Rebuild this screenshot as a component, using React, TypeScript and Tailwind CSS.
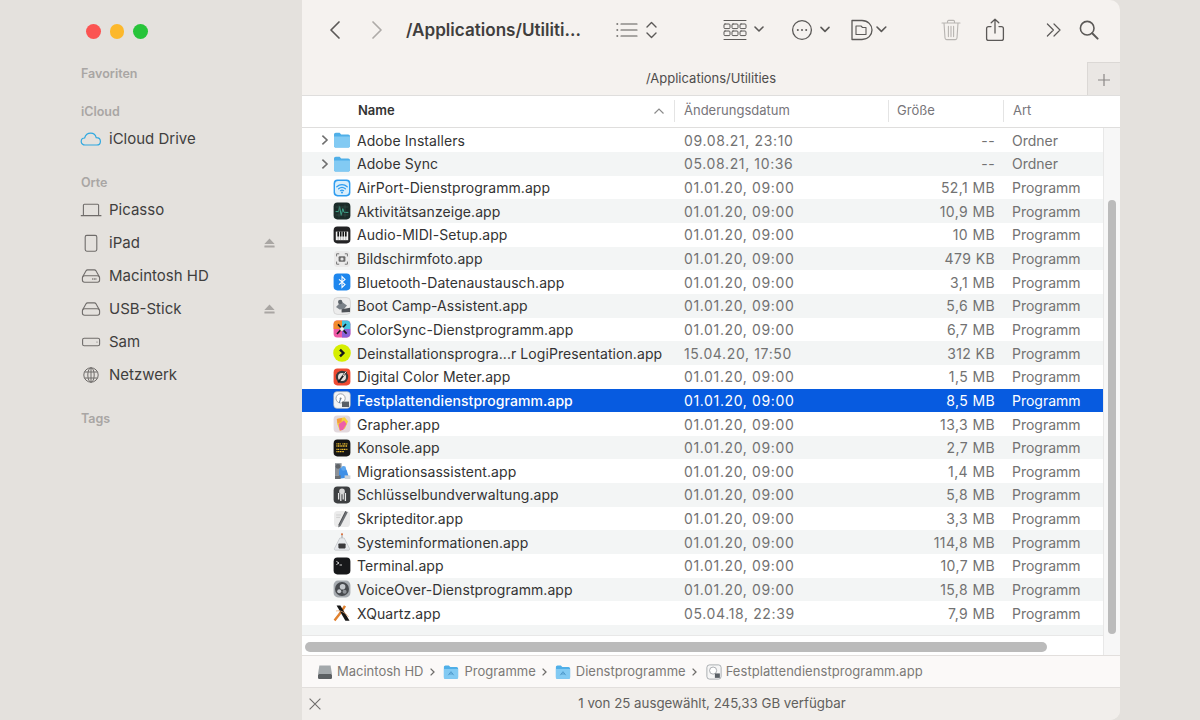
import React from 'react';

type IconKey =
  | 'folder' | 'airport' | 'activity' | 'midi' | 'shot' | 'bluetooth' | 'bootcamp' | 'colorsync'
  | 'logi' | 'meter' | 'disk' | 'grapher' | 'console' | 'migration' | 'keychain' | 'script'
  | 'sysinfo' | 'terminal' | 'voiceover' | 'xquartz';

const rows: { name: string; date: string; size: string; kind: string; icon: IconKey; folder?: boolean }[] = [
  { name: 'Adobe Installers', date: '09.08.21, 23:10', size: '--', kind: 'Ordner', icon: 'folder', folder: true },
  { name: 'Adobe Sync', date: '05.08.21, 10:36', size: '--', kind: 'Ordner', icon: 'folder', folder: true },
  { name: 'AirPort-Dienstprogramm.app', date: '01.01.20, 09:00', size: '52,1 MB', kind: 'Programm', icon: 'airport' },
  { name: 'Aktivitätsanzeige.app', date: '01.01.20, 09:00', size: '10,9 MB', kind: 'Programm', icon: 'activity' },
  { name: 'Audio-MIDI-Setup.app', date: '01.01.20, 09:00', size: '10 MB', kind: 'Programm', icon: 'midi' },
  { name: 'Bildschirmfoto.app', date: '01.01.20, 09:00', size: '479 KB', kind: 'Programm', icon: 'shot' },
  { name: 'Bluetooth-Datenaustausch.app', date: '01.01.20, 09:00', size: '3,1 MB', kind: 'Programm', icon: 'bluetooth' },
  { name: 'Boot Camp-Assistent.app', date: '01.01.20, 09:00', size: '5,6 MB', kind: 'Programm', icon: 'bootcamp' },
  { name: 'ColorSync-Dienstprogramm.app', date: '01.01.20, 09:00', size: '6,7 MB', kind: 'Programm', icon: 'colorsync' },
  { name: 'Deinstallationsprogra...r LogiPresentation.app', date: '15.04.20, 17:50', size: '312 KB', kind: 'Programm', icon: 'logi' },
  { name: 'Digital Color Meter.app', date: '01.01.20, 09:00', size: '1,5 MB', kind: 'Programm', icon: 'meter' },
  { name: 'Festplattendienstprogramm.app', date: '01.01.20, 09:00', size: '8,5 MB', kind: 'Programm', icon: 'disk' },
  { name: 'Grapher.app', date: '01.01.20, 09:00', size: '13,3 MB', kind: 'Programm', icon: 'grapher' },
  { name: 'Konsole.app', date: '01.01.20, 09:00', size: '2,7 MB', kind: 'Programm', icon: 'console' },
  { name: 'Migrationsassistent.app', date: '01.01.20, 09:00', size: '1,4 MB', kind: 'Programm', icon: 'migration' },
  { name: 'Schlüsselbundverwaltung.app', date: '01.01.20, 09:00', size: '5,8 MB', kind: 'Programm', icon: 'keychain' },
  { name: 'Skripteditor.app', date: '01.01.20, 09:00', size: '3,3 MB', kind: 'Programm', icon: 'script' },
  { name: 'Systeminformationen.app', date: '01.01.20, 09:00', size: '114,8 MB', kind: 'Programm', icon: 'sysinfo' },
  { name: 'Terminal.app', date: '01.01.20, 09:00', size: '10,7 MB', kind: 'Programm', icon: 'terminal' },
  { name: 'VoiceOver-Dienstprogramm.app', date: '01.01.20, 09:00', size: '15,8 MB', kind: 'Programm', icon: 'voiceover' },
  { name: 'XQuartz.app', date: '05.04.18, 22:39', size: '7,9 MB', kind: 'Programm', icon: 'xquartz' },
];

const FolderShape = () => (
  <>
    <path d="M1 3.6C1 2.6 1.8 1.8 2.8 1.8H6.6L8.2 3.4H15.2C16.2 3.4 17 4.2 17 5.2V14.8C17 15.8 16.2 16.6 15.2 16.6H2.8C1.8 16.6 1 15.8 1 14.8Z" fill="#4fafe8" />
    <path d="M1 5.6H17V14.8C17 15.8 16.2 16.6 15.2 16.6H2.8C1.8 16.6 1 15.8 1 14.8Z" fill="#82caf3" />
  </>
);

function AppIcon({ icon }: { icon: IconKey }) {
  let body: React.ReactNode = null;
  switch (icon) {
    case 'folder':
      body = <FolderShape />;
      break;
    case 'airport':
      body = (
        <>
          <rect x=".6" y=".6" width="16.8" height="16.8" rx="3.8" fill="#2f9df0" />
          <rect x="2" y="2" width="14" height="14" rx="3.4" fill="#d9eefb" />
          <path d="M3.8 7.8C6.8 5 11.2 5 14.2 7.8M5.6 9.8C7.6 8 10.4 8 12.4 9.8M7.4 11.7C8.4 10.9 9.6 10.9 10.6 11.7" stroke="#2f9df0" strokeWidth="1.2" fill="none" strokeLinecap="round" />
          <circle cx="9" cy="13.4" r="1" fill="#2f9df0" />
        </>
      );
      break;
    case 'activity':
      body = (
        <>
          <rect x=".6" y=".6" width="16.8" height="16.8" rx="3.8" fill="#1a2b29" />
          <path d="M2.6 9.6H5.6L6.6 4.6L8.2 13.4L9.8 6.6L11 10.4H15.4" stroke="#3fa58c" strokeWidth="1" fill="none" />
          <path d="M2.6 13H15.4M2.6 5H15.4M6 2.6V15.4M12 2.6V15.4" stroke="#33504a" strokeWidth=".6" />
        </>
      );
      break;
    case 'midi':
      body = (
        <>
          <rect x=".6" y=".6" width="16.8" height="16.8" rx="3.8" fill="#222224" />
          <rect x="2.8" y="5.6" width="12.4" height="8.6" fill="#f4f4f4" />
          <path d="M5.2 5.6V14.2M7.6 5.6V14.2M10.2 5.6V14.2M12.8 5.6V14.2" stroke="#777" strokeWidth=".5" />
          <path d="M4.4 5.6H6V10.4H4.4ZM6.9 5.6H8.5V10.4H6.9ZM9.5 5.6H11.1V10.4H9.5ZM12 5.6H13.6V10.4H12Z" fill="#151515" />
        </>
      );
      break;
    case 'shot':
      body = (
        <>
          <rect x="1" y="1" width="16" height="16" rx="3.6" fill="#eaeaea" />
          <path d="M3.6 6.4V3.8H6.2M11.8 3.8H14.4V6.4M14.4 11.6V14.2H11.8M6.2 14.2H3.6V11.6" stroke="#777" strokeWidth="1" fill="none" />
          <rect x="5.6" y="6.2" width="6.8" height="5.6" rx="1" fill="#6b6b6b" />
          <circle cx="9" cy="9" r="1.6" fill="#e2e2e2" />
        </>
      );
      break;
    case 'bluetooth':
      body = (
        <>
          <rect x=".6" y=".6" width="16.8" height="16.8" rx="3.8" fill="#1e87ee" />
          <path d="M6 6.3L12 11.6L9 14.4V3.6L12 6.4L6 11.7" stroke="#fff" strokeWidth="1.1" fill="none" />
        </>
      );
      break;
    case 'bootcamp':
      body = (
        <>
          <rect x=".6" y=".6" width="16.8" height="16.8" rx="3.8" fill="#ececec" stroke="#bdbdbd" strokeWidth=".5" />
          <path d="M3 10L8.4 4.4L14 8.6L11 12L6.6 12.4Z" fill="#7b8289" />
          <circle cx="7.2" cy="5" r="2.2" fill="#5d646a" />
          <path d="M8.6 12.2L17 10.8V15L8.6 15.6Z" fill="#4f5358" />
        </>
      );
      break;
    case 'colorsync':
      body = (
        <>
          <rect x=".6" y=".6" width="16.8" height="16.8" rx="3.6" fill="#ef5aa6" />
          <path d="M.6 4.2C.6 2.2 2.2.6 4.2.6H9V9H.6Z" fill="#f38b2e" />
          <path d="M9 .6H13.8C15.8.6 17.4 2.2 17.4 4.2V9H9Z" fill="#45c4de" />
          <path d="M9 9H17.4V13.8C17.4 15.8 15.8 17.4 13.8 17.4H9Z" fill="#8a62d8" />
          <path d="M4 14L13 4M5 4.4L13.6 13.6" stroke="#16191c" strokeWidth="1.7" />
          <circle cx="9" cy="9" r="2" fill="#f3f3f3" />
        </>
      );
      break;
    case 'logi':
      body = (
        <>
          <circle cx="9" cy="9" r="8.8" fill="#d6ee00" />
          <path d="M7 5.6L10.4 9L7 12.4" stroke="#16181c" strokeWidth="2.4" fill="none" />
        </>
      );
      break;
    case 'meter':
      body = (
        <>
          <rect x=".6" y=".6" width="16.8" height="16.8" rx="3.8" fill="#ef4a32" />
          <circle cx="9" cy="9" r="6.2" fill="#3a3a3c" />
          <circle cx="9" cy="9" r="4" fill="#e9e2dd" />
          <path d="M5.2 14.6L13.2 3.4" stroke="#1c1c1e" strokeWidth="1.8" />
          <path d="M10 8L13.2 3.4" stroke="#f7f2ec" strokeWidth="1" />
        </>
      );
      break;
    case 'disk':
      body = (
        <>
          <rect x=".6" y=".6" width="16.8" height="16.8" rx="3.6" fill="#f2f3f4" stroke="#9aa1a7" strokeWidth=".5" />
          <circle cx="7.6" cy="7.4" r="4.6" fill="#fff" stroke="#8b9096" strokeWidth=".8" />
          <path d="M7.6 7.4L6.4 11.8" stroke="#4a6f9a" strokeWidth="1" />
          <path d="M9 10.6H16V16H9Z" fill="#5a6066" />
          <circle cx="7.6" cy="7.4" r="1" fill="#7a8086" />
        </>
      );
      break;
    case 'grapher':
      body = (
        <>
          <rect x=".6" y=".6" width="16.8" height="16.8" rx="3.6" fill="#e3d9de" />
          <path d="M3.8 4L11.6 2.2L15 6.2L12 13.4L7 16L4.4 9.6Z" fill="#f3d13d" />
          <path d="M5.6 9L11 5.6L13.6 9L10 15L6.8 15.4Z" fill="#ee5fa8" />
          <path d="M3.8 4L9 3L8.4 7L4.6 8.4Z" fill="#f59a3f" />
        </>
      );
      break;
    case 'console':
      body = (
        <>
          <rect x=".6" y=".6" width="16.8" height="16.8" rx="3.8" fill="#141414" />
          <path d="M3.4 4.8H8M9.4 4.8H14.6M3.4 7H14.6" stroke="#f2c230" strokeWidth="1.3" strokeDasharray="1.1 .5" />
          <path d="M3.4 10.4H6.4M7.4 10.4H14.6M3.4 12.6H11" stroke="#f2c230" strokeWidth="1.2" strokeDasharray="1.2 .5" />
        </>
      );
      break;
    case 'migration':
      body = (
        <>
          <path d="M2 1.2H8.6V13.4H2Z" fill="#8d9197" />
          <circle cx="5" cy="4.4" r="2.4" fill="#5f6368" />
          <path d="M6.4 6.8C8.6 5 12.6 5.4 13.8 8.4L16 15.6L5.6 16.8Z" fill="#3f8fe6" />
          <circle cx="10.6" cy="6.4" r="2.4" fill="#5aa5ee" />
          <path d="M2 13.4H7.6V17H2Z" fill="#6a6e73" />
          <path d="M11.6 13.4H17.4V17H11.6Z" fill="#cfd3d8" />
        </>
      );
      break;
    case 'keychain':
      body = (
        <>
          <rect x=".6" y=".6" width="16.8" height="16.8" rx="3.8" fill="#3d3f41" />
          <circle cx="9" cy="5.4" r="2.8" fill="#d8d8d8" />
          <path d="M5.6 7V13.6M7.8 8V15M10.2 8V13.6M12.4 7V15" stroke="#e8e8e8" strokeWidth="1.3" />
        </>
      );
      break;
    case 'script':
      body = (
        <>
          <rect x="1" y="1" width="16" height="16" rx="3.6" fill="#ebebeb" />
          <path d="M5.6 15.2L12.6 1.2L14.8 2.2L7.6 16L5.2 17.4Z" fill="#6d7074" />
          <path d="M5.6 15.2L12.6 1.2" stroke="#2c2d2f" strokeWidth=".7" />
          <path d="M3.2 5H8M3.2 7.4H7" stroke="#c4c4c4" strokeWidth=".7" />
        </>
      );
      break;
    case 'sysinfo':
      body = (
        <>
          <path d="M9 .6V5" stroke="#9a9a9a" strokeWidth="1" />
          <circle cx="9" cy="1.2" r="1" fill="#e0703a" />
          <path d="M1.4 15.6L6.8 5H11.2L16.6 15.6C16.8 16.8 16.2 17.2 15.4 17.2H2.6C1.8 17.2 1.2 16.8 1.4 15.6Z" fill="#e6e9ec" stroke="#aeb2b6" strokeWidth=".5" />
          <rect x="5.4" y="10.4" width="7.2" height="5" rx=".8" fill="#3a3a3c" />
        </>
      );
      break;
    case 'terminal':
      body = (
        <>
          <rect x=".6" y=".6" width="16.8" height="16.8" rx="3.8" fill="#17181a" />
          <path d="M3.4 4.4L6 6L3.4 7.6" stroke="#e6e6e6" strokeWidth=".9" fill="none" />
          <path d="M6.6 8H9" stroke="#e6e6e6" strokeWidth=".9" />
        </>
      );
      break;
    case 'voiceover':
      body = (
        <>
          <rect x=".6" y=".6" width="16.8" height="16.8" rx="4.4" fill="#a6abb0" />
          <circle cx="9" cy="9" r="7" fill="#474a4e" />
          <circle cx="9.6" cy="6.8" r="2.8" fill="#c4c8cc" />
          <circle cx="6.2" cy="11.2" r="2" fill="#c4c8cc" />
          <circle cx="11.6" cy="11.8" r="2" fill="#8c9095" />
        </>
      );
      break;
    case 'xquartz':
      body = (
        <>
          <path d="M1.6 16.4C5 12 9 7 12 1.8" stroke="#e1812e" strokeWidth="2.4" fill="none" />
          <path d="M3.6 1.4H7.4L16.6 16.8H12.4Z" fill="#151515" />
          <path d="M3 7C7 6 12 8 15.6 13" stroke="#e8a670" strokeWidth=".8" fill="none" />
        </>
      );
      break;
  }
  return (
    <svg width="18" height="18" viewBox="0 0 18 18" className="shrink-0">
      {body}
    </svg>
  );
}

function SideIcon({ kind }: { kind: string }) {
  const st = { stroke: '#6f6c6a', strokeWidth: 1.1, fill: 'none' };
  return (
    <svg width="22" height="20" viewBox="0 0 22 20" className="shrink-0">
      {kind === 'cloud' && (
        <path d="M5.2 16C2.8 16 1.2 14.4 1.2 12.4C1.2 10.4 2.8 9 4.6 9C5.4 6.2 7.6 4.2 10.8 4.2C13.6 4.2 15.6 6.2 16.2 8.6C18.6 8.6 20.4 10.2 20.4 12.4C20.4 14.4 18.8 16 16.6 16Z" stroke="#2fa8e0" strokeWidth="1.2" fill="none" />
      )}
      {kind === 'laptop' && (
        <g {...st}>
          <path d="M3.4 15V5.2C3.4 4.6 3.8 4.2 4.4 4.2H17.6C18.2 4.2 18.6 4.6 18.6 5.2V15" />
          <path d="M.8 15.6H21.4" strokeWidth="1.3" />
        </g>
      )}
      {kind === 'ipad' && <rect x="5.2" y="2.4" width="11.6" height="15.8" rx="1.6" {...st} />}
      {(kind === 'hd' || kind === 'usb') && (
        <g {...st}>
          <path d="M2.8 10.6L6.2 4.6C6.5 4.1 7 3.9 7.5 3.9H14.5C15 3.9 15.5 4.1 15.8 4.6L19.2 10.6" />
          <rect x="2.4" y="9.8" width="17.2" height="6.4" rx="2.2" />
          {kind === 'hd' && <path d="M12.2 13H17" strokeDasharray="1 .6" strokeWidth="1.4" />}
        </g>
      )}
      {kind === 'sam' && (
        <g {...st}>
          <rect x="2.6" y="6.2" width="17" height="7.6" rx="1.6" />
          <circle cx="17" cy="10" r=".6" fill="#6f6c6a" stroke="none" />
        </g>
      )}
      {kind === 'net' && (
        <g {...st} strokeWidth="1">
          <circle cx="11" cy="10" r="7.2" />
          <ellipse cx="11" cy="10" rx="3.2" ry="7.2" />
          <path d="M4.4 7H17.6M4.4 13H17.6M11 2.8V17.2" />
        </g>
      )}
    </svg>
  );
}

const Eject = () => (
  <svg width="11" height="10" viewBox="0 0 11 10" className="shrink-0">
    <path d="M5.5 0.5L10.6 6H.4Z" fill="#a9a6a3" />
    <rect x=".4" y="7.4" width="10.2" height="2.2" rx=".4" fill="#a9a6a3" />
  </svg>
);

function SideLabel({ text, className }: { text: string; className: string }) {
  return <div className={`text-[12.5px] leading-[16px] font-semibold text-[#a9a6a4] pl-[11px] ${className}`}>{text}</div>;
}

function SideItem({ kind, text, eject, className }: { kind: string; text: string; eject?: boolean; className?: string }) {
  return (
    <div className={`flex items-center h-[33px] pl-[10px] pr-[27px] ${className ?? ''}`}>
      <SideIcon kind={kind} />
      <span className="ml-[7px] text-[15px] text-[#403e3d] flex-1">{text}</span>
      {eject && <Eject />}
    </div>
  );
}

function Sidebar() {
  return (
    <aside className="w-[232px] shrink-0 flex flex-col">
      <div className="flex gap-[9px] pl-[16px] pt-[24px]">
        <span className="w-[14.5px] h-[14.5px] rounded-full bg-[#fb5452]" />
        <span className="w-[14.5px] h-[14.5px] rounded-full bg-[#fcb82c]" />
        <span className="w-[14.5px] h-[14.5px] rounded-full bg-[#27c43a]" />
      </div>
      <SideLabel text="Favoriten" className="mt-[27px]" />
      <SideLabel text="iCloud" className="mt-[22px]" />
      <SideItem kind="cloud" text="iCloud Drive" className="mt-[3px]" />
      <SideLabel text="Orte" className="mt-[19px]" />
      <SideItem kind="laptop" text="Picasso" className="mt-[3px]" />
      <SideItem kind="ipad" text="iPad" eject />
      <SideItem kind="hd" text="Macintosh HD" />
      <SideItem kind="usb" text="USB-Stick" eject />
      <SideItem kind="sam" text="Sam" />
      <SideItem kind="net" text="Netzwerk" />
      <SideLabel text="Tags" className="mt-[19px]" />
    </aside>
  );
}

function Toolbar() {
  const s = { stroke: '#5b5957', strokeWidth: 1.4, fill: 'none', strokeLinecap: 'round' as const, strokeLinejoin: 'round' as const };
  return (
    <div className="h-[62px] pb-[2px] flex items-center pl-[26px]">
      <svg width="14" height="20" viewBox="0 0 14 20" className="shrink-0">
        <path d="M11 2L3 10L11 18" {...s} strokeWidth="1.7" />
      </svg>
      <svg width="14" height="20" viewBox="0 0 14 20" className="shrink-0 ml-[28px]">
        <path d="M3 2L11 10L3 18" {...s} stroke="#aeaba8" strokeWidth="1.7" />
      </svg>
      <span className="ml-[22px] w-[190px] shrink-0 text-[17.1px] font-semibold text-[#403e3d] whitespace-nowrap">/Applications/Utiliti...</span>
      <svg width="42" height="22" viewBox="0 0 42 22" className="shrink-0 ml-[20px]">
        <path d="M5 5H21M5 11H21M5 17H21" {...s} strokeWidth="1.2" />
        <path d="M1 5H1.6M1 11H1.6M1 17H1.6" {...s} strokeWidth="1.4" />
        <path d="M31 8L35.5 3.6L40 8M31 14L35.5 18.4L40 14" {...s} />
      </svg>
      <svg width="44" height="22" viewBox="0 0 44 22" className="shrink-0 ml-[65px]">
        <path d="M1 1.5H23M1 20.5H23" {...s} strokeWidth="1" />
        {[1, 9, 17].map(x => (
          <g key={x}>
            <rect x={x} y="5" width="6" height="4.6" rx="1" {...s} strokeWidth="1" />
            <rect x={x} y="12" width="6" height="4.6" rx="1" {...s} strokeWidth="1" />
          </g>
        ))}
        <path d="M32 8L36 12L40 8" {...s} strokeWidth="1.6" />
      </svg>
      <svg width="42" height="22" viewBox="0 0 42 22" className="shrink-0 ml-[24px]">
        <circle cx="11" cy="11" r="9.4" {...s} strokeWidth="1.3" />
        <circle cx="6.8" cy="11" r="1" fill="#5b5957" />
        <circle cx="11" cy="11" r="1" fill="#5b5957" />
        <circle cx="15.2" cy="11" r="1" fill="#5b5957" />
        <path d="M30 8.4L34 12.4L38 8.4" {...s} strokeWidth="1.6" />
      </svg>
      <svg width="38" height="22" viewBox="0 0 38 22" className="shrink-0 ml-[18px]">
        <path d="M1 1.5H11C17 1.5 21 6 21 11C21 16 17 20.5 11 20.5H1Z" {...s} strokeWidth="1.3" />
        <path d="M5 7H10L11.5 8.5H15V15.5H5Z" {...s} strokeWidth="1.1" />
        <path d="M26 8L30.4 12.4L34.8 8" {...s} strokeWidth="1.6" />
      </svg>
      <svg width="20" height="22" viewBox="0 0 20 22" className="shrink-0 ml-[52px]">
        <path d="M1 4H19M6.5 4V2.6C6.5 2 7 1.4 7.6 1.4H12.4C13 1.4 13.5 2 13.5 2.6V4M3 4L4 19C4.1 20 4.8 20.6 5.6 20.6H14.4C15.2 20.6 15.9 20 16 19L17 4M7.4 7.4V17.6M10 7.4V17.6M12.6 7.4V17.6" {...s} stroke="#b7b4b1" strokeWidth="1.1" />
      </svg>
      <svg width="20" height="24" viewBox="0 0 20 24" className="shrink-0 ml-[24px]">
        <path d="M6 8.6H3.6C2.4 8.6 1.6 9.4 1.6 10.6V20.4C1.6 21.6 2.4 22.4 3.6 22.4H16.4C17.6 22.4 18.4 21.6 18.4 20.4V10.6C18.4 9.4 17.6 8.6 16.4 8.6H14M10 15V1.4M6.2 4.8L10 1.2L13.8 4.8" {...s} strokeWidth="1.3" />
      </svg>
      <svg width="16" height="16" viewBox="0 0 16 16" className="shrink-0 ml-[41px]">
        <path d="M1.4 2L7.4 8L1.4 14M8 2L14 8L8 14" {...s} strokeWidth="1.2" />
      </svg>
      <svg width="20" height="20" viewBox="0 0 20 20" className="shrink-0 ml-[17px]">
        <circle cx="8.2" cy="8.2" r="6.8" {...s} strokeWidth="1.6" />
        <path d="M13.2 13.2L18.6 18.6" {...s} strokeWidth="2" />
      </svg>
    </div>
  );
}

function HeaderRow() {
  return (
    <div className="h-[33px] pb-[2px] bg-white border-y border-[#dfdedd] flex items-center text-[13px] text-[#77757a]">
      <span className="ml-[56px] font-semibold text-[#333] w-[295px]">Name</span>
      <svg width="12" height="8" viewBox="0 0 12 8" className="shrink-0">
        <path d="M1.5 6.5L6 2L10.5 6.5" stroke="#8b8b8b" strokeWidth="1.2" fill="none" />
      </svg>
      <span className="ml-[9px] w-px h-[22px] bg-[#e4e4e4]" />
      <span className="ml-[9px] w-[204px]">Änderungsdatum</span>
      <span className="w-px h-[22px] bg-[#e4e4e4]" />
      <span className="ml-[8px] w-[106px]">Größe</span>
      <span className="w-px h-[22px] bg-[#e4e4e4]" />
      <span className="ml-[9px]">Art</span>
    </div>
  );
}

function FileRow({ row, index }: { row: (typeof rows)[number]; index: number }) {
  const selected = row.name.startsWith('Festplatten');
  const bg = selected ? 'bg-[#075be0]' : index % 2 === 1 ? 'bg-[#f3f5f5]' : 'bg-white';
  return (
    <div className={`h-[23.65px] flex items-center text-[14px] whitespace-nowrap ${bg} ${selected ? 'text-white' : 'text-[#727272]'}`}>
      <span className="w-[31px] shrink-0 flex justify-end pr-[3px]">
        {row.folder && (
          <svg width="10" height="12" viewBox="0 0 10 12">
            <path d="M2.4 1.6L7 6L2.4 10.4" stroke="#6f6f6f" strokeWidth="1.6" fill="none" />
          </svg>
        )}
      </span>
      <AppIcon icon={row.icon} />
      <span className={`ml-[6px] w-[327px] shrink-0 tracking-[0.07px] ${selected ? 'font-[450]' : 'text-[#333333]'}`}>{row.name}</span>
      <span className="w-[214px] shrink-0 tracking-[0.63px]">{row.date}</span>
      <span className="w-[97px] shrink-0 text-right tracking-[0.4px]">{row.size}</span>
      <span className="ml-[17px] shrink-0">{row.kind}</span>
    </div>
  );
}

function PathBar() {
  const Chevron = () => (
    <svg width="7" height="10" viewBox="0 0 7 10" className="shrink-0 mx-[5px]">
      <path d="M1.6 1.6L5 5L1.6 8.4" stroke="#6f6d6b" strokeWidth="1.3" fill="none" />
    </svg>
  );
  const PathFolder = () => (
    <svg width="16" height="16" viewBox="0 0 18 18" className="shrink-0 mr-[5px] ml-[2px]">
      <FolderShape />
      <path d="M6 12.6L9 8.6L12 12.6M7.2 11.2H10.8" stroke="#3c89bd" strokeWidth=".8" fill="none" />
    </svg>
  );
  return (
    <div className="h-[33px] bg-[#fbf9f8] border-y border-[#e2dfdd] flex items-center pl-[15px] text-[13px] text-[#7b7977] whitespace-nowrap">
      <svg width="16" height="16" viewBox="0 0 16 16" className="shrink-0 mr-[4px]">
        <path d="M2.4 1.6H13.6L15 10H1Z" fill="#a3a8ab" />
        <rect x="1" y="10" width="14" height="5" rx="1.2" fill="#5c6063" />
      </svg>
      <span className="mr-[1px]">Macintosh HD</span>
      <Chevron />
      <PathFolder />
      <span>Programme</span>
      <Chevron />
      <PathFolder />
      <span>Dienstprogramme</span>
      <Chevron />
      <svg width="16" height="16" viewBox="0 0 18 18" className="shrink-0 mr-[4px] ml-[3px]">
        <rect x="1" y="1" width="16" height="16" rx="3" fill="#f6f6f6" stroke="#8d9298" strokeWidth=".8" />
        <circle cx="8" cy="7.4" r="4" fill="#fff" stroke="#8b9096" strokeWidth=".8" />
        <path d="M10 10.6H15.6V15.6H10Z" fill="#5a6066" />
      </svg>
      <span className="tracking-[0.06px]">Festplattendienstprogramm.app</span>
    </div>
  );
}

export default function App() {
  return (
    <div className="w-[1200px] h-[720px] overflow-hidden bg-[#e4e1dd] flex pl-[70px] font-['Inter','Liberation_Sans',sans-serif]">
      <div className="w-[1050px] h-[720px] flex rounded-t-[10px] rounded-br-[10px] overflow-hidden">
        <Sidebar />
        <main className="flex-1 flex flex-col bg-[#f5f2ef] min-w-0">
          <Toolbar />
          <div className="h-[33px] flex items-stretch">
            <div className="flex-1 flex items-center justify-center text-[13px] text-[#4f4d4c] pl-[33px]">/Applications/Utilities</div>
            <div className="w-[33px] bg-[#eae7e4] border-l border-t border-[#dbd8d5] flex items-center justify-center pt-[1px]">
              <svg width="14" height="14" viewBox="0 0 14 14">
                <path d="M7 1V13M1 7H13" stroke="#8a8886" strokeWidth="1.2" />
              </svg>
            </div>
          </div>
          <HeaderRow />
          <div className="flex-1 bg-white flex min-h-0 relative">
            <div className="w-[802px] shrink-0 border-r border-[#e8e8e8] pt-[0.5px]">
              {rows.map((row, i) => (
                <FileRow key={row.name} row={row} index={i} />
              ))}
              <div className="h-[11px] bg-[#f3f5f5] border-b border-[#e8e8e8]" />
            </div>
            <div className="flex-1 bg-[#f7f7f7]" />
            {/* overlay scroll bars */}
            <div className="absolute right-[4px] top-[72px] h-[434px] w-[8px] rounded-full bg-[#bbbbbb]" />
            <div className="absolute left-[3px] bottom-[3px] h-[10px] w-[742px] rounded-full bg-[#bbbbbb]" />
          </div>
          <PathBar />
          <div className="h-[32px] bg-[#f1eeeb] flex items-center relative text-[13.3px] text-[#615f5d]">
            <svg width="14" height="14" viewBox="0 0 14 14" className="absolute left-[6px] top-[9px]">
              <path d="M1.6 1.6L12.4 12.4M12.4 1.6L1.6 12.4" stroke="#6f6d6b" strokeWidth="1.1" />
            </svg>
            <span className="w-full text-center pl-[2px]">1 von 25 ausgewählt, 245,33 GB verfügbar</span>
          </div>
        </main>
      </div>
    </div>
  );
}
